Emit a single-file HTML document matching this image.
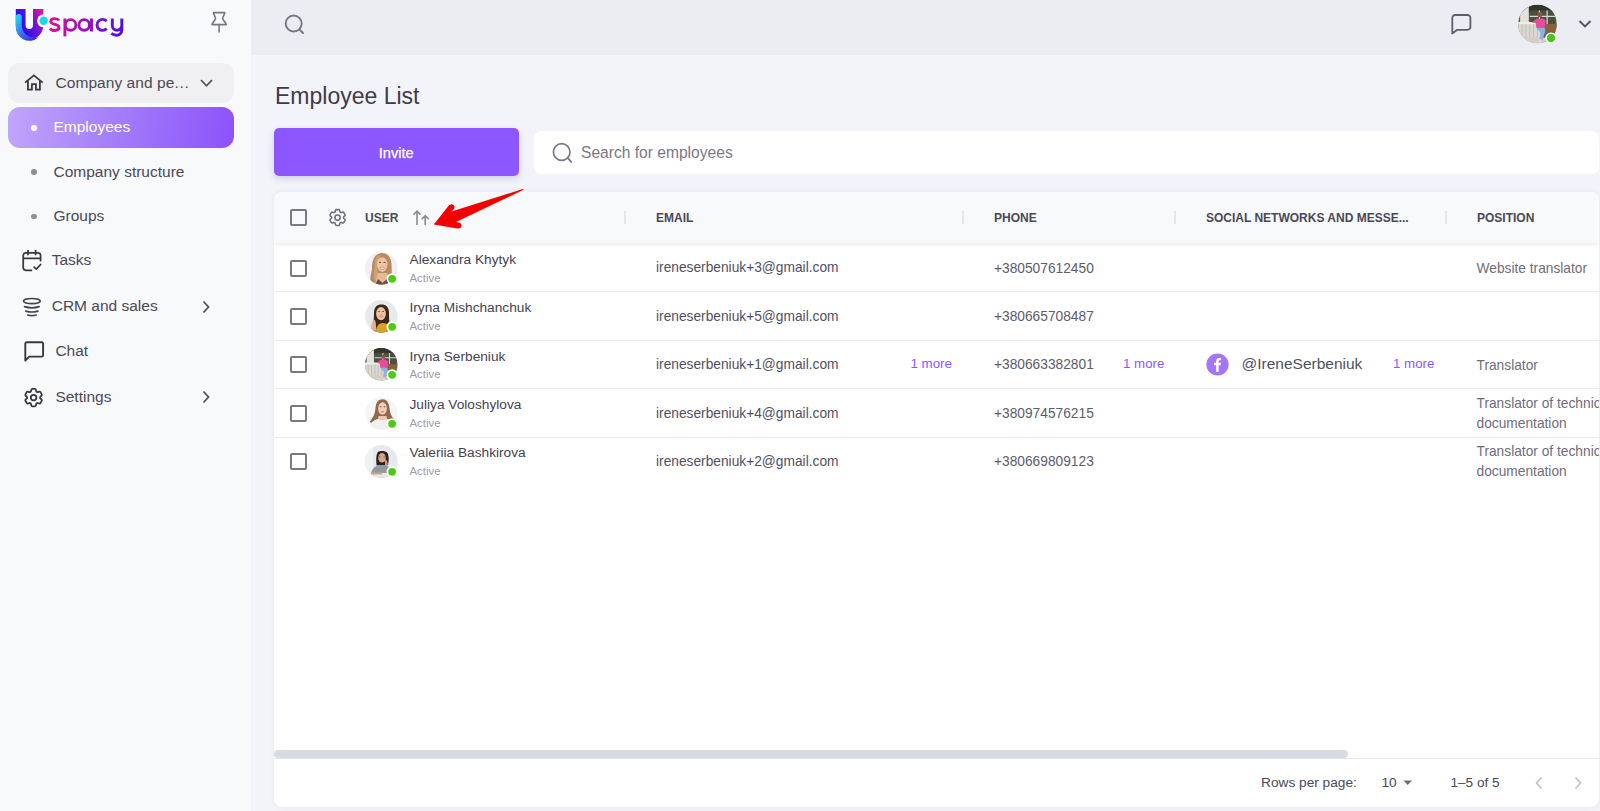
<!DOCTYPE html>
<html><head><meta charset="utf-8">
<style>
*{box-sizing:border-box;margin:0;padding:0}
html,body{width:1600px;height:811px;overflow:hidden;background:#f3f4f9;font-family:"Liberation Sans",sans-serif;color:#4a4658}
.abs{position:absolute}
#side{position:absolute;left:0;top:0;width:251px;height:811px;background:#f8f9fb}
#top{position:absolute;left:251px;top:0;width:1349px;height:55px;background:#ecedf2}
.nav{position:absolute;white-space:nowrap;font-size:15.5px;color:#4b4856;line-height:18px}
.card{position:absolute;left:274px;top:192px;width:1325px;height:615px;background:#fff;border-radius:8px;box-shadow:0 0 6px rgba(40,40,80,.06);overflow:hidden}
.hdr{position:absolute;left:0;top:0;width:1325px;height:51px;background:#f8f9fb;box-shadow:0 2px 4px rgba(40,40,80,.08)}
.th{position:absolute;top:19.5px;font-size:12px;font-weight:bold;color:#4b4856;letter-spacing:0;line-height:13px;white-space:nowrap}
.div{position:absolute;top:19px;width:2px;height:13px;background:#e6e6ea}
.row{position:absolute;left:0;width:1325px;border-bottom:1px solid #ebebef}
.td{position:absolute;font-size:13.75px;color:#53505e;white-space:nowrap;line-height:16px}
.more{position:absolute;font-size:13.3px;color:#9155fd;white-space:nowrap;line-height:16px}
.cb{position:absolute;left:16px;width:17px;height:17px;border:2px solid #7a7884;border-radius:2px}
.name{position:absolute;left:135.5px;font-size:13.7px;color:#45424f;white-space:nowrap;line-height:16px}
.act{position:absolute;left:135.5px;font-size:11.4px;color:#9d9ba8;white-space:nowrap;line-height:14px}
</style></head><body>
<svg width="0" height="0" style="position:absolute">
<defs>
<path id="cog" d="M9.594 3.94c.09-.542.56-.94 1.11-.94h2.593c.55 0 1.02.398 1.11.94l.213 1.281c.063.374.313.686.645.87.074.04.147.083.22.127.325.196.72.257 1.075.124l1.217-.456a1.125 1.125 0 0 1 1.37.49l1.296 2.247a1.125 1.125 0 0 1-.26 1.431l-1.003.827c-.293.241-.438.613-.43.992a7.723 7.723 0 0 1 0 .255c-.008.378.137.75.43.991l1.004.827c.424.35.534.955.26 1.43l-1.298 2.247a1.125 1.125 0 0 1-1.369.491l-1.217-.456c-.355-.133-.75-.072-1.076.124a6.47 6.47 0 0 1-.22.128c-.331.183-.581.495-.644.869l-.213 1.281c-.09.543-.56.94-1.11.94h-2.594c-.55 0-1.019-.398-1.11-.94l-.213-1.281c-.062-.374-.312-.686-.644-.87a6.52 6.52 0 0 1-.22-.127c-.325-.196-.72-.257-1.076-.124l-1.217.456a1.125 1.125 0 0 1-1.369-.49l-1.297-2.247a1.125 1.125 0 0 1 .26-1.431l1.004-.827c.292-.24.437-.613.43-.991a6.932 6.932 0 0 1 0-.255c.007-.38-.138-.751-.43-.992l-1.004-.827a1.125 1.125 0 0 1-.26-1.43l1.297-2.247a1.125 1.125 0 0 1 1.37-.491l1.216.456c.356.133.751.072 1.076-.124.072-.044.146-.086.22-.128.332-.183.582-.495.644-.869l.214-1.28Z"/>
<g id="photo">
  <rect width="40" height="40" fill="#5a5a4c"/>
  <rect x="0" y="0" width="40" height="8" fill="#34342a"/>
  <rect x="12" y="6" width="26" height="14" fill="#4a5040"/>
  <path d="M22 6 V20 M30 6 V20 M12 12 H40" stroke="#d8d8d0" stroke-width="1.3"/>
  <rect x="2" y="2" width="9" height="38" fill="#e4e2dc"/>
  <rect x="0" y="18" width="24" height="22" fill="#dcdad4"/>
  <path d="M4 19 V40 M8 19 V40 M12 19 V40 M16 19 V40 M20 19 V40" stroke="#b8b6ae" stroke-width="0.9"/>
  <rect x="0" y="18" width="24" height="2.2" fill="#f0eee8"/>
  <rect x="27" y="20" width="13" height="8" fill="#8a6238"/>
  <rect x="28" y="28" width="12" height="12" fill="#6e6a60"/>
  <rect x="0" y="34" width="40" height="6" fill="#d4cec4"/>
  <path d="M14 18.5 L19 14.5 L25 14 L28.5 16 L27.5 24 L19 24.5 L18 19 Z" fill="#ec4a9c"/>
  <path d="M19 24.5 L27.5 24 L28 28 L25 37 L22 37 L23 29 Z" fill="#8cb2dc"/>
  <circle cx="22.5" cy="10.5" r="2.6" fill="#8a5840"/>
  <rect x="21.5" y="36" width="3" height="3" fill="#e8d8d0"/>
</g>
<clipPath id="avc"><circle cx="16.3" cy="16.3" r="16.3"/></clipPath>
<g id="dot"><circle cx="27.1" cy="26.8" r="5.6" fill="#fff"/><circle cx="27.1" cy="26.8" r="3.9" fill="#4ccb14"/></g>
<g id="av1"><g clip-path="url(#avc)">
  <rect width="33" height="33" fill="#eef0f5"/>
  <path d="M6 30 C4 26 7 21 7 16 C7 9 9 2 16.5 1 C23.5 1 26 6 26.5 12 C27 18 26 22 28 27 C26 31 22 33 16 33 C11 33 8 32 6 30 Z" fill="#b68c5e"/>
  <path d="M9 28 C8 22 10 16 10 12 C10 6 12 3 16 3 C12 8 12 20 13 30 Z" fill="#caa274"/>
  <path d="M12.5 21 H22 L25 33 H10 Z" fill="#e6b896"/>
  <path d="M10 33 L13 27 L17.5 31 L22 27 L25 33 Z" fill="#6e4a40"/>
  <ellipse cx="17.2" cy="12.6" rx="5.2" ry="7.4" fill="#eec4a4"/>
  <ellipse cx="15" cy="10.4" rx="1.1" ry="0.6" fill="#6a4a38"/>
  <ellipse cx="19.4" cy="10.4" rx="1.1" ry="0.6" fill="#6a4a38"/>
  <ellipse cx="17.2" cy="16.2" rx="2.3" ry="1.1" fill="#f6f0ea" stroke="#9a5a48" stroke-width="0.5"/>
</g><use href="#dot"/></g>
<g id="av2"><g clip-path="url(#avc)">
  <rect width="33" height="33" fill="#e6eaea"/>
  <path d="M8.5 33 C8 26 9 18 9 13 C9 7 12 4.5 16.5 4.5 C21 4.5 24 7 24 13 C24 19 24.5 24 25.5 33 Z" fill="#3c2618"/>
  <path d="M11 33 C11 27 13 23 18 23 C23 23 26 27 26 33 Z" fill="#d8a224"/>
  <ellipse cx="16" cy="13.6" rx="4.9" ry="6.6" fill="#ecc0a0"/>
  <path d="M6 30 C6 25 7 21 9 19.5 C10.5 20 11 23 11 26 L11.5 31 Z" fill="#e2ae8c"/>
  <ellipse cx="14.1" cy="11.6" rx="0.9" ry="0.5" fill="#4a3020"/>
  <ellipse cx="18.1" cy="11.6" rx="0.9" ry="0.5" fill="#4a3020"/>
  <ellipse cx="16.2" cy="16" rx="1.8" ry="0.8" fill="#f4ece6" stroke="#a05a48" stroke-width="0.5"/>
</g><use href="#dot"/></g>
<g id="av3"><g clip-path="url(#avc)"><g transform="scale(0.815)"><use href="#photo"/></g></g><use href="#dot"/></g>
<g id="av4"><g clip-path="url(#avc)">
  <rect width="33" height="33" fill="#f6f6f7"/>
  <path d="M4.5 25 C8 21 10 17 10.5 11 C11 5 13.5 2.2 17.5 2.2 C21.5 2.2 24 5 24.5 11 C25 17 27 20 30 23 L27 25 C22 22 13 22 7 26 Z" fill="#8e6a46"/>
  <path d="M3 33 C4 26 9 21.5 17.5 21.5 C26 21.5 30 26 31 33 Z" fill="#f0f0f0"/>
  <path d="M13.5 19 H21.5 L22 22 C20 23.5 15 23.5 13 22 Z" fill="#ecc4b0"/>
  <ellipse cx="17.5" cy="11.5" rx="4.4" ry="6.2" fill="#f2ccb8"/>
  <ellipse cx="15.6" cy="9.8" rx="0.9" ry="0.5" fill="#5a4030"/>
  <ellipse cx="19.4" cy="9.8" rx="0.9" ry="0.5" fill="#5a4030"/>
  <ellipse cx="17.5" cy="14.8" rx="1.6" ry="0.8" fill="#d8808a"/>
</g><use href="#dot"/></g>
<g id="av5"><g clip-path="url(#avc)">
  <rect width="33" height="33" fill="#e4eaee"/>
  <rect x="0" y="0" width="8" height="33" fill="#eef2f2"/>
  <path d="M5 33 C6 24 10 19.5 16.5 19.5 C23 19.5 27 23 28.5 33 Z" fill="#8f99a3"/>
  <path d="M11.5 20 C11 15 11 9 13 7 C15 5.5 20 5.5 22 7.5 C24 10 24 15 23 20 Z" fill="#2a2020"/>
  <ellipse cx="17" cy="12.8" rx="3.8" ry="4.8" fill="#d8a488"/>
  <path d="M20 14 C22 15 23 17 22.5 21 L20 21 Z" fill="#d09878"/>
  <rect x="0" y="28" width="33" height="5" fill="#e6eae8"/>
  <path d="M6 27.5 H17 V29.5 H6 Z" fill="#d8a080"/>
  <path d="M13.5 12 H15.5 M18.5 12 H20.5" stroke="#4a3028" stroke-width="0.6"/>
</g><use href="#dot"/></g>
</defs></svg>
<div id="side">
  <!-- logo -->
  <svg class="abs" style="left:0;top:0" width="140" height="45" viewBox="0 0 140 45">
    <defs>
      <linearGradient id="ug" gradientUnits="userSpaceOnUse" x1="22" y1="24" x2="44" y2="14">
        <stop offset="0" stop-color="#3410e6"/><stop offset="0.5" stop-color="#7014d4"/><stop offset="1" stop-color="#e8168c"/>
      </linearGradient>
      <linearGradient id="uc" gradientUnits="userSpaceOnUse" x1="17" y1="14" x2="34" y2="40">
        <stop offset="0" stop-color="#18e0f4"/><stop offset="0.45" stop-color="#3a90f2"/><stop offset="0.8" stop-color="#3c50f0"/><stop offset="1" stop-color="#3a2cea"/>
      </linearGradient>
      <linearGradient id="tg" gradientUnits="userSpaceOnUse" x1="49" y1="0" x2="124" y2="0">
        <stop offset="0" stop-color="#dc0f96"/><stop offset="0.5" stop-color="#960fc0"/><stop offset="1" stop-color="#4b10e0"/>
      </linearGradient>
    </defs>
    <path d="M15.8 8.9 H25.6 V25.2 A3.7 3.7 0 0 0 33 25.2 V8.9 H43.3 V25.5 A13.75 13.75 0 0 1 15.8 25.5 Z" fill="url(#ug)"/>
    <path d="M15.8 16.9 A2.95 2.95 0 0 1 21.7 16.9 V25.5 C21.7 32 27 37.2 34 37.6 C36 37.7 37.5 37.6 38.6 37.3 A13.75 13.75 0 0 1 15.8 25.5 Z" fill="url(#uc)"/>
    <circle cx="43.6" cy="20.8" r="6.5" fill="#f8f9fb"/>
    <circle cx="43.6" cy="20.8" r="4.2" fill="#16d8ee"/>
    <g fill="none" stroke="url(#tg)" stroke-width="2.9" stroke-linecap="butt">
      <path d="M59 20.5 C58 19 56.5 18.6 54.7 18.6 C52.2 18.6 50.8 19.8 50.8 21.5 C50.8 25.4 59 23.3 59 27.6 C59 29.5 57.2 30.5 54.8 30.5 C52.6 30.5 51 29.7 50 28.3"/>
      <path d="M64.9 18.5 V36.4"/>
      <circle cx="70.6" cy="24.9" r="5.3"/>
      <circle cx="84.2" cy="24.9" r="5.3"/>
      <path d="M91.5 18.5 V31.5"/>
      <path d="M106.6 21.2 A5.5 5.5 0 1 0 106.6 28.6"/>
      <path d="M112.3 18.5 V25.5 A4.7 4.7 0 0 0 121.8 25.5 V18.5 V30.5 A5.2 5.2 0 0 1 116.6 35.2 C114.2 35.2 112.8 34.6 111.3 33.4"/>
    </g>
  </svg>
  <!-- pin -->
  <svg class="abs" style="left:208px;top:9.5px" width="22" height="24" viewBox="0 0 22 24">
    <path d="M5.4 2.6 H16.8 C16.8 4.6 14.7 6.4 14.7 8.6 C14.7 10.8 18.3 12.4 18.3 14.6 H4 C4 12.4 7.5 10.8 7.5 8.6 C7.5 6.4 5.4 4.6 5.4 2.6 Z" fill="none" stroke="#797682" stroke-width="1.6" stroke-linejoin="round"/>
    <path d="M11.1 14.6 V22" stroke="#797682" stroke-width="1.6" stroke-linecap="round"/>
  </svg>
  <!-- company box -->
  <div class="abs" style="left:8px;top:63px;width:225.5px;height:40px;border-radius:12px;background:#f0f0f3"></div>
  <svg class="abs" style="left:23px;top:73px" width="22" height="20" viewBox="0 0 22 20">
    <path d="M2.1 9.6 L10.9 2.4 L19.7 9.6 M4.9 7.6 V16.6 H8.9 V11.2 H12.9 V16.6 H16.9 V7.6" fill="none" stroke="#3b3846" stroke-width="1.8" stroke-linejoin="miter"/>
  </svg>
  <div class="nav" style="left:55.5px;top:74px;letter-spacing:0.06px">Company and pe<span style="letter-spacing:0.7px">...</span></div>
  <svg class="abs" style="left:199px;top:77px" width="15" height="12" viewBox="0 0 15 12">
    <path d="M2 3 L7.5 8.8 L13 3" fill="none" stroke="#55525e" stroke-width="1.8"/>
  </svg>
  <!-- employees active -->
  <div class="abs" style="left:8px;top:107px;width:225.5px;height:40.5px;border-radius:12px;background:linear-gradient(100deg,#c3a5fb 0%,#a27bfa 50%,#8c52fb 100%)"></div>
  <div class="abs" style="left:31px;top:125px;width:5.5px;height:5.5px;border-radius:50%;background:#fff"></div>
  <div class="nav" style="left:53.5px;top:118px;color:#fff">Employees</div>
  <div class="abs" style="left:31px;top:169px;width:5.5px;height:5.5px;border-radius:50%;background:#908e9a"></div>
  <div class="nav" style="left:53.5px;top:162.5px">Company structure</div>
  <div class="abs" style="left:31px;top:213.5px;width:5.5px;height:5.5px;border-radius:50%;background:#908e9a"></div>
  <div class="nav" style="left:53.5px;top:207px">Groups</div>
  <!-- tasks -->
  <svg class="abs" style="left:20px;top:248px" width="24" height="25" viewBox="0 0 24 25">
    <path d="M12.2 22.3 H5.9 A2.7 2.7 0 0 1 3.2 19.6 V7.6 A2.7 2.7 0 0 1 5.9 4.9 H17.9 A2.7 2.7 0 0 1 20.6 7.6 V13.5 M3.2 10.4 H20.6 M8 2.1 V7.3 M15.6 2.1 V7.3" fill="none" stroke="#3b3846" stroke-width="1.75"/>
    <path d="M14.05 19.1 L16.3 21.1 L20.6 16.5" fill="none" stroke="#3b3846" stroke-width="1.75" stroke-linecap="round" stroke-linejoin="round"/>
  </svg>
  <div class="nav" style="left:51.7px;top:251px">Tasks</div>
  <!-- CRM -->
  <svg class="abs" style="left:20px;top:296px" width="24" height="23" viewBox="0 0 24 23">
    <ellipse cx="11.85" cy="5.1" rx="8.4" ry="2.55" fill="none" stroke="#45424f" stroke-width="1.6"/>
    <path d="M4.6 10.6 Q11.85 13 19.1 10.6 M5.8 15.1 Q11.85 16.9 17.9 15.1 M7.6 19 Q11.85 20.1 16.2 19" fill="none" stroke="#45424f" stroke-width="1.7" stroke-linecap="round"/>
  </svg>
  <div class="nav" style="left:51.7px;top:296.5px">CRM and sales</div>
  <svg class="abs" style="left:200px;top:299px" width="12" height="16" viewBox="0 0 12 16">
    <path d="M3.5 2.5 L8.5 8 L3.5 13.5" fill="none" stroke="#55525e" stroke-width="1.8"/>
  </svg>
  <!-- chat -->
  <svg class="abs" style="left:22px;top:340px" width="24" height="23" viewBox="0 0 24 23">
    <path d="M3.3 20.5 V3.5 A1.3 1.3 0 0 1 4.6 2.3 H19.8 A1.3 1.3 0 0 1 21.1 3.6 V15.3 A1.3 1.3 0 0 1 19.8 16.6 H7.2 Z" fill="none" stroke="#3b3846" stroke-width="1.9" stroke-linejoin="round"/>
  </svg>
  <div class="nav" style="left:55.4px;top:342px">Chat</div>
  <!-- settings -->
  <svg class="abs" style="left:21.95px;top:385.8px" width="23.2" height="23.2" viewBox="0 0 24 24">
    <use href="#cog" fill="none" stroke="#3b3846" stroke-width="1.85" stroke-linejoin="miter"/>
    <circle cx="12" cy="12" r="2.9" fill="none" stroke="#3b3846" stroke-width="1.85"/>
  </svg>
  <div class="nav" style="left:55.4px;top:388px">Settings</div>
  <svg class="abs" style="left:200px;top:389px" width="12" height="16" viewBox="0 0 12 16">
    <path d="M3.5 2.5 L8.5 8 L3.5 13.5" fill="none" stroke="#55525e" stroke-width="1.8"/>
  </svg>
</div>

<div id="top">
  <svg class="abs" style="left:31px;top:11px" width="26" height="26" viewBox="0 0 26 26">
    <circle cx="11.7" cy="12.5" r="8" fill="none" stroke="#787682" stroke-width="1.9"/>
    <path d="M17.6 18.6 L21 22" stroke="#787682" stroke-width="2" stroke-linecap="round"/>
  </svg>
  <svg class="abs" style="left:1198px;top:12px" width="24" height="25" viewBox="0 0 24 25">
    <path d="M3.3 21.4 V5.8 A2.8 2.8 0 0 1 6.1 3 H18.6 A2.8 2.8 0 0 1 21.4 5.8 V15 A2.8 2.8 0 0 1 18.6 17.8 H8.3 Z" fill="none" stroke="#5f5c6b" stroke-width="1.8" stroke-linejoin="round"/>
  </svg>
  <!-- top avatar -->
  <svg class="abs" style="left:1266px;top:4px" width="42" height="42" viewBox="0 0 42 42">
    <defs><clipPath id="ca"><circle cx="20.5" cy="20" r="19.3"/></clipPath></defs>
    <g clip-path="url(#ca)"><g transform="translate(1.2,0.7) scale(0.965)"><use href="#photo"/></g></g>
    <circle cx="34" cy="34" r="5.6" fill="#fff"/>
    <circle cx="34" cy="34" r="4.2" fill="#4cc418"/>
  </svg>
  <svg class="abs" style="left:1326px;top:17px" width="16" height="14" viewBox="0 0 16 14">
    <path d="M2.5 4 L8 9.5 L13.5 4" fill="none" stroke="#55525e" stroke-width="1.9"/>
  </svg>
</div>

<div class="abs" style="left:275px;top:83px;font-size:23px;color:#3e3b49;line-height:27px;white-space:nowrap">Employee List</div>

<div class="abs" style="left:274px;top:128px;width:244.5px;height:48px;background:#8c57ff;border-radius:5px;box-shadow:0 3px 7px rgba(80,60,140,.2)"></div>
<div class="abs" style="left:274px;top:145px;width:244.5px;text-align:center;font-size:14.6px;color:#fff;line-height:17px;-webkit-text-stroke:0.25px #fff">Invite</div>

<div class="abs" style="left:533.5px;top:131px;width:1065.5px;height:42.5px;background:#fff;border-radius:7px"></div>
<svg class="abs" style="left:550px;top:140px" width="26" height="26" viewBox="0 0 26 26">
  <circle cx="11.7" cy="12" r="8.3" fill="none" stroke="#7b7984" stroke-width="1.7"/>
  <path d="M17.8 18.2 L21.3 21.8" stroke="#7b7984" stroke-width="1.8" stroke-linecap="round"/>
</svg>
<div class="abs" style="left:581px;top:143.7px;font-size:15.6px;color:#7b7984;line-height:18px;white-space:nowrap">Search for employees</div>

<div class="card">
  <div class="row" style="top:52.10px;height:48.4px">
    <div class="cb" style="top:15.5px"></div>
    <svg class="abs av" style="left:90.5px;top:7.5px" width="36" height="36" viewBox="0 0 36 36"><use href="#av1"/></svg>
    <div class="name" style="top:7.7px">Alexandra Khytyk</div>
    <div class="act" style="top:26.5px">Active</div>
    <div class="td" style="left:382px;top:16.3px">ireneserbeniuk+3@gmail.com</div>
    <div class="td" style="left:720px;top:16.5px;color:#5e5c69">+380507612450</div>
    <div class="td" style="left:1202.5px;top:16.7px;color:#6f6d79">Website translator</div>
  </div>
  <div class="row" style="top:100.50px;height:48.4px">
    <div class="cb" style="top:15.5px"></div>
    <svg class="abs av" style="left:90.5px;top:7.5px" width="36" height="36" viewBox="0 0 36 36"><use href="#av2"/></svg>
    <div class="name" style="top:7.7px">Iryna Mishchanchuk</div>
    <div class="act" style="top:26.5px">Active</div>
    <div class="td" style="left:382px;top:16.3px">ireneserbeniuk+5@gmail.com</div>
    <div class="td" style="left:720px;top:16.5px;color:#5e5c69">+380665708487</div>
  </div>
  <div class="row" style="top:148.90px;height:48.4px">
    <div class="cb" style="top:15.5px"></div>
    <svg class="abs av" style="left:90.5px;top:7.5px" width="36" height="36" viewBox="0 0 36 36"><use href="#av3"/></svg>
    <div class="name" style="top:7.7px">Iryna Serbeniuk</div>
    <div class="act" style="top:26.5px">Active</div>
    <div class="td" style="left:382px;top:16.3px">ireneserbeniuk+1@gmail.com</div>
    <div class="td" style="left:720px;top:16.5px;color:#5e5c69">+380663382801</div>
    <div class="more" style="left:636.5px;top:15px">1 more</div>
    <div class="more" style="left:849px;top:15px">1 more</div>
    <svg class="abs" style="left:931.5px;top:12.5px" width="23" height="23" viewBox="0 0 24 24"><circle cx="12" cy="12" r="11.6" fill="#a475f6"/><path d="M13.2 19.5 V12.8 H15.4 L15.7 10.3 H13.2 V8.8 C13.2 8.1 13.5 7.6 14.5 7.6 H15.8 V5.4 C15.4 5.3 14.6 5.2 13.8 5.2 C11.9 5.2 10.6 6.4 10.6 8.5 V10.3 H8.4 V12.8 H10.6 V19.5 Z" fill="#fff"/></svg>
    <div class="td" style="left:967.5px;top:14.5px;font-size:15.5px;color:#524f5c;line-height:18px">@IreneSerbeniuk</div>
    <div class="more" style="left:1119px;top:15px">1 more</div>
    <div class="td" style="left:1202.5px;top:16.7px;color:#6f6d79">Translator</div>
  </div>
  <div class="row" style="top:197.30px;height:48.4px">
    <div class="cb" style="top:15.5px"></div>
    <svg class="abs av" style="left:90.5px;top:7.5px" width="36" height="36" viewBox="0 0 36 36"><use href="#av4"/></svg>
    <div class="name" style="top:7.7px">Juliya Voloshylova</div>
    <div class="act" style="top:26.5px">Active</div>
    <div class="td" style="left:382px;top:16.3px">ireneserbeniuk+4@gmail.com</div>
    <div class="td" style="left:720px;top:16.5px;color:#5e5c69">+380974576215</div>
    <div class="td" style="left:1202.5px;top:4.5px;line-height:19.7px;color:#6f6d79">Translator of technical<br>documentation</div>
  </div>
  <div class="row" style="top:245.70px;height:48.4px;border-bottom:none">
    <div class="cb" style="top:15.5px"></div>
    <svg class="abs av" style="left:90.5px;top:7.5px" width="36" height="36" viewBox="0 0 36 36"><use href="#av5"/></svg>
    <div class="name" style="top:7.7px">Valeriia Bashkirova</div>
    <div class="act" style="top:26.5px">Active</div>
    <div class="td" style="left:382px;top:16.3px">ireneserbeniuk+2@gmail.com</div>
    <div class="td" style="left:720px;top:16.5px;color:#5e5c69">+380669809123</div>
    <div class="td" style="left:1202.5px;top:4.5px;line-height:19.7px;color:#6f6d79">Translator of technical<br>documentation</div>
  </div>
  <div class="hdr">
    <div class="cb" style="top:17px"></div>
    <svg class="abs" style="left:52.9px;top:14.9px" width="21.1" height="21.1" viewBox="0 0 24 24">
      <use href="#cog" fill="none" stroke="#6f6c78" stroke-width="1.75"/>
      <circle cx="12" cy="12" r="3" fill="none" stroke="#6f6c78" stroke-width="1.75"/>
    </svg>
    <div class="th" style="left:91px">USER</div>
    <svg class="abs" style="left:136px;top:16px" width="22" height="20" viewBox="0 0 22 20">
      <path d="M7 17 V3.2 M3.4 6.8 L7 3.2 L10.6 6.8 M15.2 17 V7.6 M11.6 11.2 L15.2 7.6 L18.8 11.2" fill="none" stroke="#8b8995" stroke-width="1.6"/>
    </svg>
    <div class="div" style="left:350px"></div>
    <div class="th" style="left:382px">EMAIL</div>
    <div class="div" style="left:688px"></div>
    <div class="th" style="left:720px">PHONE</div>
    <div class="div" style="left:900px"></div>
    <div class="th" style="left:932px">SOCIAL NETWORKS AND MESSE...</div>
    <div class="div" style="left:1171px"></div>
    <div class="th" style="left:1203px">POSITION</div>
  </div>
  <div class="abs" style="left:0;top:558px;width:1074px;height:8px;border-radius:4px;background:#d8dbe3"></div>
  <div class="abs" style="left:0;top:566px;width:1325px;height:1px;background:#e6e6ea"></div>
  <div class="abs" style="left:987px;top:582.8px;font-size:13.7px;color:#4a4757;line-height:16px;white-space:nowrap">Rows per page:</div>
  <div class="abs" style="left:1107.5px;top:582.8px;font-size:13.7px;color:#4a4757;line-height:16px;white-space:nowrap">10</div>
  <svg class="abs" style="left:1128px;top:587px" width="12" height="8" viewBox="0 0 12 8"><path d="M1.5 1.5 H10 L5.75 6 Z" fill="#6f6c78"/></svg>
  <div class="abs" style="left:1176.5px;top:582.8px;font-size:13.6px;color:#4a4757;line-height:16px;white-space:nowrap">1–5 of 5</div>
  <svg class="abs" style="left:1259px;top:582.5px" width="12" height="16" viewBox="0 0 12 16"><path d="M8.5 2.5 L3.5 8 L8.5 13.5" fill="none" stroke="#c0bec8" stroke-width="1.6"/></svg>
  <svg class="abs" style="left:1298px;top:582.5px" width="12" height="16" viewBox="0 0 12 16"><path d="M3.5 2.5 L8.5 8 L3.5 13.5" fill="none" stroke="#c0bec8" stroke-width="1.6"/></svg>
</div>
<svg class="abs" style="left:400px;top:180px" width="140" height="60" viewBox="400 180 140 60">
  <path d="M433.8 224.4 L448.2 206.2 C449.6 204.3 452 203.6 453.6 205 C455 206.2 454.8 208.3 453.5 209.6 L451.6 211.6 L522.8 189 L523.6 189.8 L456 222 L458.8 222.6 C460.6 223 461.8 224.6 461.4 226.3 C461 228 459.2 228.8 457.2 228.4 Z" fill="#f50000"/>
</svg>
</body></html>
